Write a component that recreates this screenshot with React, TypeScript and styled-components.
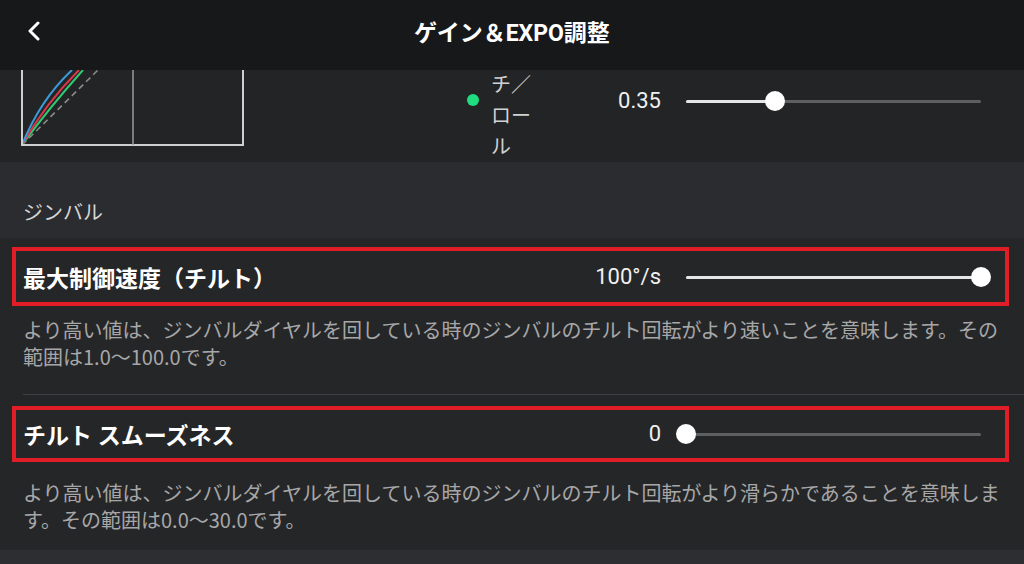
import React from "react";
import styled, { createGlobalStyle } from "styled-components";

const Global = createGlobalStyle`
  html, body { margin: 0; padding: 0; background: #252628; }
  body { font-family: Roboto, "Noto Sans CJK JP", sans-serif; }
  * { box-sizing: border-box; }
`;

const Page = styled.div`
  width: 1024px;
  height: 564px;
  overflow: hidden;
  display: flex;
  flex-direction: column;
  background: #252628;
  color: #eeeeee;
`;

const Header = styled.header`
  height: 70px;
  flex: none;
  background: #17181a;
  display: grid;
  grid-template-columns: 60px 1fr 60px;
  align-items: center;
  padding-bottom: 8px;
`;

const BackButton = styled.button`
  border: 0;
  background: none;
  padding: 0;
  margin-left: 26px;
  width: 18px;
  height: 22px;
  display: flex;
  align-items: center;
  justify-content: center;
  cursor: pointer;
`;

const Title = styled.h1`
  margin: 0;
  text-align: center;
  font-size: 23px;
  font-weight: 700;
  color: #ffffff;
  letter-spacing: 0;
`;

const CurvePanel = styled.section`
  height: 92px;
  flex: none;
  background: #232426;
  display: flex;
  align-items: flex-start;
  overflow: hidden;
  padding-right: 43px;
`;

const ChartBox = styled.div`
  margin-left: 21px;
  width: 226px;
  height: 77px;
  flex: none;
`;

const Legend = styled.div`
  margin-left: 220px;
  display: flex;
  align-items: flex-start;
  flex: none;
`;

const Dot = styled.span<{ $color: string }>`
  width: 12px;
  height: 12px;
  border-radius: 50%;
  margin-top: 24px;
  background: ${(p) => p.$color};
`;

const LegendLabel = styled.span`
  margin-left: 12px;
  width: 44px;
  font-size: 20px;
  line-height: 31px;
  color: #d2d2d2;
`;

const PanelControl = styled.div`
  flex: 1;
  margin-top: 19px;
  display: flex;
  justify-content: flex-end;
`;

const Control = styled.div`
  display: flex;
  align-items: center;
  gap: 25px;
`;

const Value = styled.span`
  font-size: 22px;
  line-height: 24px;
  color: #f0f0f0;
  text-align: right;
  white-space: nowrap;
`;

const SliderTrack = styled.div`
  position: relative;
  width: 295px;
  height: 20px;
  flex: none;
`;

const Rail = styled.div`
  position: absolute;
  left: 0;
  right: 0;
  top: 9px;
  height: 3px;
  border-radius: 2px;
  background: #5e5f61;
`;

const Fill = styled.div`
  position: absolute;
  left: 0;
  top: 9px;
  height: 3px;
  border-radius: 2px;
  background: #e6e6e6;
`;

const Thumb = styled.div`
  position: absolute;
  top: 0;
  width: 20px;
  height: 20px;
  margin-left: -10px;
  border-radius: 50%;
  background: #ffffff;
`;

const SectionBand = styled.div`
  flex: none;
  background: #2b2c2f;
  padding: 37px 23px 11px;
  font-size: 20px;
  line-height: 28px;
  color: #d6d6d6;
`;

const List = styled.div`
  flex: none;
  background: #252628;
  padding: 9px 0 17px;
`;

const Highlight = styled.div<{ $height: number; $top: number }>`
  height: ${(p) => p.$height}px;
  margin: ${(p) => p.$top}px 15px 0 12px;
  border: 4px solid #e11d27;
  padding: 0 24px 0 7px;
  display: flex;
  align-items: center;
`;

const SettingTitle = styled.span`
  flex: 1;
  font-size: 23px;
  font-weight: 700;
  color: #ffffff;
  white-space: nowrap;
`;

const Description = styled.p<{ $top: number }>`
  margin: ${(p) => p.$top}px 0 0;
  padding: 0 14px 0 23px;
  font-size: 20px;
  line-height: 27px;
  color: #a7a7a8;
  font-family: "Noto Sans CJK JP", sans-serif;
`;

const Divider = styled.hr`
  margin: 24px 0 0 23px;
  border: 0;
  height: 1px;
  background: #3f4043;
`;

const BottomBand = styled.div`
  flex: 1;
  background: #2d2e31;
`;

function Slider({ fraction }: { fraction: number }) {
  const pct = `${fraction * 100}%`;
  return (
    <SliderTrack>
      <Rail />
      <Fill style={{ width: pct }} />
      <Thumb style={{ left: pct }} />
    </SliderTrack>
  );
}

function CurveChart() {
  return (
    <svg width="226" height="77" viewBox="0 0 226 77">
      <path d="M1 75 L77 0" stroke="#8a8a8a" strokeWidth="1.6" strokeDasharray="6 4" fill="none" />
      <path d="M1 75 Q28 38 62 0" stroke="#2ecc71" strokeWidth="2" fill="none" />
      <path d="M1 75 Q24 34 58 0" stroke="#d8374a" strokeWidth="2" fill="none" />
      <path d="M1 75 Q19 30 51 0" stroke="#3b9bd8" strokeWidth="2" fill="none" />
      <path d="M1 0 V75 H222 V0" stroke="#cfcfcf" strokeWidth="2" fill="none" />
      <path d="M112 0 V75" stroke="#9a9a9a" strokeWidth="1.5" fill="none" />
    </svg>
  );
}

export default function App() {
  return (
    <Page>
      <Global />
      <Header>
        <BackButton aria-label="back">
          <svg width="14" height="20" viewBox="0 0 14 20">
            <polyline points="10,2 2,10 10,18" fill="none" stroke="#ffffff" strokeWidth="3" strokeLinecap="round" strokeLinejoin="round" />
          </svg>
        </BackButton>
        <Title>ゲイン＆EXPO調整</Title>
        <span />
      </Header>

      <CurvePanel>
        <ChartBox>
          <CurveChart />
        </ChartBox>
        <Legend>
          <Dot $color="#1fdc7e" />
          <LegendLabel>チ／ロール</LegendLabel>
        </Legend>
        <PanelControl>
          <Control>
            <Value>0.35</Value>
            <Slider fraction={0.3} />
          </Control>
        </PanelControl>
      </CurvePanel>

      <SectionBand>ジンバル</SectionBand>

      <List>
        <Highlight $height={59} $top={0}>
          <SettingTitle>最大制御速度（チルト）</SettingTitle>
          <Control>
            <Value>100°/s</Value>
            <Slider fraction={1} />
          </Control>
        </Highlight>
        <Description $top={10}>
          より高い値は、ジンバルダイヤルを回している時のジンバルのチルト回転がより速いことを意味します。その範囲は1.0〜100.0です。
        </Description>
        <Divider />
        <Highlight $height={56} $top={11}>
          <SettingTitle>チルト スムーズネス</SettingTitle>
          <Control>
            <Value>0</Value>
            <Slider fraction={0} />
          </Control>
        </Highlight>
        <Description $top={17}>
          より高い値は、ジンバルダイヤルを回している時のジンバルのチルト回転がより滑らかであることを意味します。その範囲は0.0〜30.0です。
        </Description>
      </List>
      <BottomBand />
    </Page>
  );
}
